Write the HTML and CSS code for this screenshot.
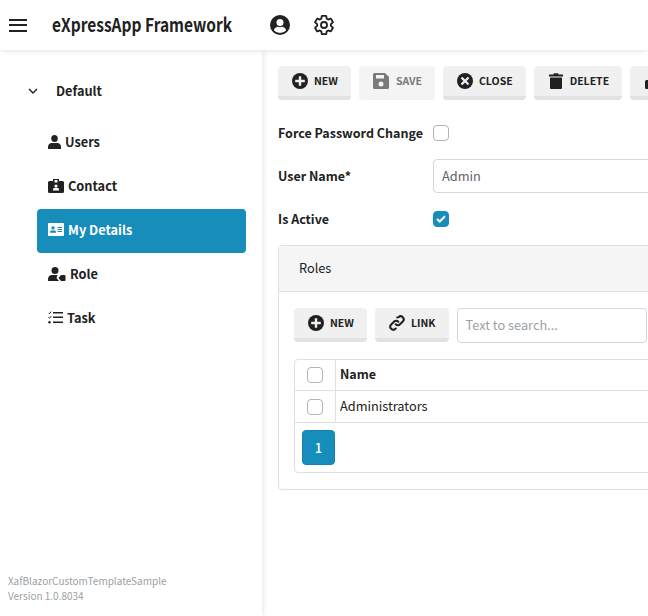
FILE: index.html

```html
<!DOCTYPE html>
<html lang="en">
<head>
  <meta charset="UTF-8">
  <title>eXpressApp Framework</title>
  <link rel="stylesheet" href="styles.css">
</head>
<body>

<header class="topbar">
  <button class="menu-btn" aria-label="Menu"><span></span><span></span><span></span></button>
  <div class="app-title"><span>eXpressApp Framework</span></div>
  <svg class="top-icon" viewBox="0 0 20 20"><circle cx="10" cy="10" r="10" fill="#212121"/><circle cx="10" cy="7.6" r="3.5" fill="#fff"/><path d="M3.8 15.2c1-2.4 3-3.4 4.2-3.4.7.3 1.3.4 2 .4s1.300-.1 2-.4c1.200 0 3.200 1 4.200 3.400A8 8 0 0 1 10 18a8 8 0 0 1-6.200-2.800z" fill="#fff"/></svg>
  <svg class="top-icon gear" viewBox="0 0 24 24"><path d="M19.430 12.980c.04-.32.07-.64.07-.98 0-.34-.03-.66-.07-.98l2.110-1.650c.19-.15.24-.42.12-.64l-2-3.460c-.09-.16-.26-.25-.44-.25-.06 0-.12.01-.17.03l-2.490 1c-.52-.4-1.080-.73-1.690-.98l-.38-2.650C14.460 2.180 14.250 2 14 2h-4c-.25 0-.46.18-.49.42l-.38 2.650c-.61.25-1.170.59-1.690.98l-2.490-1c-.06-.02-.12-.03-.18-.03-.17 0-.34.09-.43.25l-2 3.460c-.13.22-.07.49.12.64l2.110 1.650c-.04.32-.07.65-.07.98 0 .33.03.66.07.98l-2.110 1.650c-.19.15-.24.42-.12.64l2 3.460c.09.16.26.25.44.25.06 0 .12-.01.17-.03l2.490-1c.52.4 1.080.73 1.690.98l.38 2.650c.03.24.24.42.49.42h4c.25 0 .46-.18.49-.42l.38-2.650c.61-.25 1.170-.59 1.690-.98l2.490 1c.06.02.12.03.18.03.17 0 .34-.09.43-.25l2-3.460c.12-.22.07-.49-.12-.64z" fill="none" stroke="#212121" stroke-width="2" stroke-linejoin="round"/><circle cx="12" cy="12" r="3.300" fill="none" stroke="#212121" stroke-width="2"/></svg>
</header>

<div class="layout">
  <aside class="sidebar">
    <div class="nav-group">
      <svg class="chevron" viewBox="0 0 10 6"><path d="M1 1l4 4 4-4" fill="none" stroke="#212121" stroke-width="1.400"/></svg>
      <span>Default</span>
    </div>
    <nav class="nav-list">
      <a class="nav-item">
        <svg class="nav-icon" width="13" height="14" viewBox="0 0 14 14" preserveAspectRatio="none"><circle cx="7" cy="3.500" r="3.500"/><path d="M0 14v-2c0-2.500 2-4 4-4h6c2 0 4 1.500 4 4v2z"/></svg>
        Users
      </a>
      <a class="nav-item">
        <svg class="nav-icon" width="16" height="14" viewBox="0 0 16 14"><path fill-rule="evenodd" d="M1.500 2H5V0h6v2h3.500A1.500 1.500 0 0 1 16 3.500v9a1.500 1.500 0 0 1-1.500 1.500h-13A1.500 1.500 0 0 1 0 12.500v-9A1.500 1.500 0 0 1 1.500 2zM6.500 1v2.500h3V1zM8 5.500a1.600 1.600 0 1 0 0 3.200 1.600 1.600 0 0 0 0-3.200zM5 10v1.500h6V10c0-.6-1-1-3-1s-3 .4-3 1z"/></svg>
        Contact
      </a>
      <a class="nav-item active">
        <svg class="nav-icon" width="16" height="13" viewBox="0 0 16 13"><path fill-rule="evenodd" d="M1 0h14a1 1 0 0 1 1 1v11a1 1 0 0 1-1 1H1a1 1 0 0 1-1-1V1a1 1 0 0 1 1-1zM5 3.200a1.700 1.700 0 1 0 0 3.400 1.700 1.700 0 0 0 0-3.400zM2 9.800h6V9c0-1-1-1.700-3-1.700S2 8 2 9zM9.500 4v1H14V4zM9.500 6v1H14V6zM9.500 8v1H14V8z"/></svg>
        My Details
      </a>
      <a class="nav-item">
        <svg class="nav-icon" width="18" height="14" viewBox="0 0 18 14"><circle cx="7" cy="3.500" r="3.500"/><path d="M0 14v-2c0-2.500 2-4 4-4h5.500L8.500 11l2.500 3z"/><path d="M10.500 11l2.500-3h3.500a1 1 0 0 1 1 1v4a1 1 0 0 1-1 1H13z"/></svg>
        Role
      </a>
      <a class="nav-item">
        <svg class="nav-icon" width="15" height="13" viewBox="0 0 15 13"><path d="M.5 1.800l1 1L3.200.6M.5 6.300l1 1 1.700-2.200" fill="none" stroke="currentColor"/><circle cx="1.500" cy="11.300" r="1.200"/><path d="M5 1h10v1.500H5zM5 5.500h10V7H5zM5 10.500h10V12H5z"/></svg>
        Task
      </a>
    </nav>
    <div class="about">
      <div>XafBlazorCustomTemplateSample</div>
      <div>Version 1.0.8034</div>
    </div>
  </aside>

  <main class="main">
    <div class="view">
      <div class="toolbar">
        <button class="btn">
          <svg class="btn-icon" viewBox="0 0 16 16"><circle cx="8" cy="8" r="8"/><path d="M6.800 3.200h2.400v3.600h3.600v2.400H9.200v3.600H6.800V9.200H3.200V6.800h3.600z" fill="#f0f0f0"/></svg>
          <span>New</span>
        </button>
        <button class="btn disabled">
          <svg class="btn-icon" viewBox="0 0 16 16"><path fill-rule="evenodd" d="M1.500 0H12l4 4v10.500a1.500 1.500 0 0 1-1.500 1.500h-13A1.500 1.500 0 0 1 0 14.500v-13A1.500 1.500 0 0 1 1.500 0zM3 2v3.500h8V2zM8 8.500a2.500 2.500 0 1 0 0 5 2.500 2.500 0 0 0 0-5z"/></svg>
          <span>Save</span>
        </button>
        <button class="btn">
          <svg class="btn-icon" viewBox="0 0 16 16"><circle cx="8" cy="8" r="8"/><path d="M5.300 3.700L8 6.400l2.700-2.700 1.600 1.600L9.600 8l2.700 2.700-1.600 1.600L8 9.600l-2.700 2.700-1.600-1.600L6.400 8 3.700 5.300z" fill="#f0f0f0"/></svg>
          <span>Close</span>
        </button>
        <button class="btn">
          <svg class="btn-icon" viewBox="0 0 14 16"><path d="M0 1.500h4.300L5 .3h4l.7 1.200H14v2H0zM1 4.500h12V15a1 1 0 0 1-1 1H2a1 1 0 0 1-1-1z"/></svg>
          <span>Delete</span>
        </button>
        <button class="btn lock-btn" aria-label="Lock">
          <svg class="btn-icon" viewBox="0 0 14 16"><path d="M3 7V4.500a4 4 0 0 1 8 0V7h1.500A1.500 1.500 0 0 1 14 8.500v6a1.500 1.500 0 0 1-1.500 1.500h-11A1.500 1.500 0 0 1 0 14.500v-6A1.500 1.500 0 0 1 1.500 7zm2 0h4V4.500a2 2 0 0 0-4 0z"/></svg>
        </button>
      </div>

      <div class="field check-field">
        <label>Force Password Change</label>
        <span class="check"></span>
      </div>
      <div class="field input-field">
        <label>User Name*</label>
        <input class="text-input" value="Admin">
      </div>
      <div class="field check-field">
        <label>Is Active</label>
        <span class="check checked">
          <svg width="10" height="8" viewBox="0 0 10 8"><path d="M1 4l2.700 2.500L9 1.200" fill="none" stroke="#fff" stroke-width="2"/></svg>
        </span>
      </div>

      <section class="panel">
        <div class="panel-head">Roles</div>
        <div class="panel-body">
          <div class="panel-tools">
            <button class="btn">
              <svg class="btn-icon" viewBox="0 0 16 16"><circle cx="8" cy="8" r="8"/><path d="M6.800 3.200h2.400v3.600h3.600v2.400H9.200v3.600H6.800V9.200H3.200V6.800h3.600z" fill="#f0f0f0"/></svg>
              <span>New</span>
            </button>
            <button class="btn">
              <svg class="btn-icon" viewBox="0 0 16 16"><path d="M6.700 9.300a3 3 0 0 0 4.300 0l2.800-2.800a3 3 0 0 0-4.300-4.300L8.200 2.500M9.300 6.700a3 3 0 0 0-4.300 0L2.200 9.500a3 3 0 0 0 4.300 4.300l.3-.3" fill="none" stroke="#212121" stroke-width="2" stroke-linecap="round"/></svg>
              <span>Link</span>
            </button>
            <input class="text-input search" placeholder="Text to search...">
          </div>

          <div class="grid">
            <div class="grid-row head">
              <div class="grid-check"><span class="check"></span></div>
              <div class="grid-cell">Name</div>
            </div>
            <div class="grid-row">
              <div class="grid-check"><span class="check"></span></div>
              <div class="grid-cell">Administrators</div>
            </div>
            <div class="pager"><button class="page-btn">1</button></div>
          </div>
        </div>
      </section>
    </div>
  </main>
</div>

</body>
</html>
```

FILE: styles.css

```css
* { box-sizing: border-box; }
html, body { margin: 0; height: 100%; overflow: hidden; }
body { background: #fff; color: #212121; font-family: "Noto Sans CJK SC", "Noto Sans", sans-serif; font-size: 12.750px; display: flex; flex-direction: column; }

.topbar { height: 50px; flex: none; display: flex; align-items: center; background: #fff; box-shadow: 0 0 6px rgba(0,0,0,.15); position: relative; z-index: 2; }
.menu-btn { width: 18px; height: 13px; margin-left: 9px; padding: 0; border: 0; background: none; display: flex; flex-direction: column; justify-content: space-between; }
.menu-btn span { height: 2px; background: #212121; display: block; }
.app-title { margin-left: 25px; width: 218px; padding-bottom: 3px; font-size: 19px; font-weight: 700; white-space: nowrap; }
.app-title span { display: inline-block; transform: scaleX(.815); transform-origin: left center; }
.top-icon { width: 20px; height: 20px; }
.gear { width: 22px; height: 22px; margin-left: 23px; }

.layout { flex: 1; display: flex; min-height: 0; }
.sidebar { width: 262px; flex: none; display: flex; flex-direction: column; box-shadow: 0 0 6px rgba(0,0,0,.15); position: relative; padding-top: 20px; }
.nav-group { height: 42px; margin-bottom: 9px; display: flex; align-items: center; padding-left: 28px; font-weight: 700; }
.nav-group span { padding-bottom: 2px; }
.chevron { width: 10px; height: 6px; margin-right: 18px; }
.nav-list { display: flex; flex-direction: column; padding-left: 37px; width: 246px; }
.nav-item { height: 44px; display: flex; align-items: center; gap: 4px; padding: 0 0 3px 11px; border-radius: 4px; font-weight: 700; }
.nav-item.active { background: #178dbb; color: #fff; }
.nav-icon { fill: currentColor; flex: none; }
.about { margin-top: auto; padding: 0 0 13px 8px; font-size: 10px; line-height: 15px; color: #9a9fa6; }

.main { flex: 1; min-width: 0; overflow: hidden; }
.view { width: 760px; padding: 16px 0 0 16px; }
.toolbar, .panel-tools { display: flex; gap: 8px; }
.btn { height: 34px; padding: 0 13px 0 14px; border: 0; border-bottom: 4px solid #e2e2e2; border-radius: 4px; background: #f0f0f0; color: #212121; font: 700 10.500px "Noto Sans CJK SC", "Noto Sans", sans-serif; text-transform: uppercase; display: flex; align-items: center; gap: 6px; }
.btn span { padding-bottom: 2px; }
.btn.disabled { gap: 7px; background: #f4f4f4; border-bottom-color: #f4f4f4; color: #7a7a7a; }
.btn-icon { width: 16px; height: 16px; fill: currentColor; }
.lock-btn { width: 60px; }

.field { display: flex; align-items: center; }
.field label { width: 155px; flex: none; padding-bottom: 2px; font-size: 12.500px; font-weight: 700; white-space: nowrap; }
.check-field { height: 16px; }
.toolbar + .field { margin-top: 25px; }
.input-field { margin-top: 18px; }
.input-field + .field { margin-top: 18px; }
.text-input { height: 34px; border: 1px solid #d3d7dc; border-radius: 4px; padding: 0 8px 2px; font: 12.750px "Noto Sans CJK SC", "Noto Sans", sans-serif; color: #5f6368; width: 320px; outline: none; }
.text-input::placeholder { color: #9a9fa6; }
.check { width: 16px; height: 16px; border: 1px solid #aeb5bf; border-radius: 4px; display: flex; align-items: center; justify-content: center; background: #fff; }
.check.checked { background: #178dbb; border-color: #178dbb; }

.panel { margin-top: 18px; height: 245px; border: 1px solid #e0e0e0; border-radius: 4px; }
.panel-head { height: 46px; padding: 0 0 2px 20px; display: flex; align-items: center; background: #f5f5f5; border-bottom: 1px solid #e0e0e0; }
.panel-body { padding: 16px 15px 0; }
.search { width: 190px; height: 35px; }
.grid { margin-top: 16px; border: 1px solid #e0e0e0; border-radius: 4px; height: 114px; }
.grid-row { height: 32px; display: flex; border-bottom: 1px solid #e0e0e0; }
.grid-row.head { height: 31px; font-size: 12.500px; font-weight: 700; }
.grid-check { width: 41px; flex: none; border-right: 1px solid #e0e0e0; display: flex; align-items: center; justify-content: center; }
.grid-cell { padding: 0 0 3px 4px; display: flex; align-items: center; }
.pager { padding: 7px 7px 0; }
.page-btn { width: 33px; height: 35px; border: 1px solid #1583ae; border-radius: 4px; background: #178dbb; color: #fff; font: 500 13px "Noto Sans CJK SC", "Noto Sans", sans-serif; padding: 0; }
```
